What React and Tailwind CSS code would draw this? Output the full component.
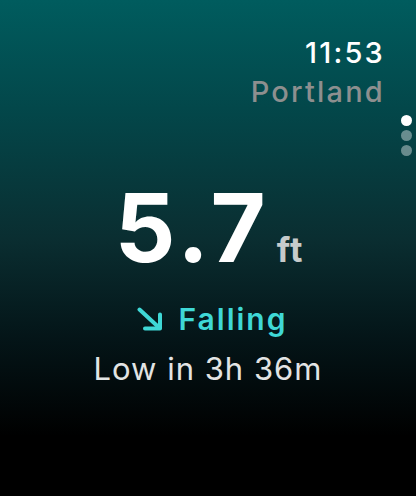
import React from 'react';

const PageDots = () => (
  <div className="absolute right-[4px] top-[115px] flex flex-col gap-[4px]">
    <span className="w-[11px] h-[11px] rounded-full bg-white"></span>
    <span className="w-[11px] h-[11px] rounded-full bg-white/40"></span>
    <span className="w-[11px] h-[11px] rounded-full bg-white/40"></span>
  </div>
);

const FallingArrow = () => (
  <svg width="26" height="24" viewBox="0 0 26 24" fill="none" className="shrink-0">
    <path d="M2.5 2.5 L22.5 21" stroke="#3fd8d6" strokeWidth="4" strokeLinecap="round" />
    <path d="M23 7.5 L23 21.5 L8 21.5" stroke="#3fd8d6" strokeWidth="4" strokeLinecap="round" strokeLinejoin="round" />
  </svg>
);

export default function App() {
  return (
    <div
      className="relative w-[416px] h-[496px] overflow-hidden flex flex-col bg-[linear-gradient(180deg,#005c5e_0%,#03474a_22%,#0a2e31_48%,#041518_68%,#000000_88%)]"
      style={{ fontFamily: 'Inter, "Noto Sans", sans-serif' }}
    >
      {/* Header: time + city */}
      <div className="flex flex-col items-end pr-[31px] pt-[38px]">
        <span className="text-[29px] leading-none font-medium text-white tracking-[2.2px]">11:53</span>
        <span className="mt-[10px] text-[29px] leading-none font-medium text-[#8d8f8f] tracking-[2.2px]">Portland</span>
      </div>

      <PageDots />

      {/* Tide reading */}
      <div className="flex flex-col items-center mt-[74px]">
        <div className="flex items-baseline gap-[7px] pl-[2px]">
          <span className="text-[95px] leading-none font-bold text-white tracking-[4px]">5.7</span>
          <span className="text-[34px] leading-none font-bold text-[#c6cbcb] tracking-[1px]">ft</span>
        </div>
        <div className="mt-[29px] flex items-center gap-[16px] pl-[8px]">
          <FallingArrow />
          <span className="text-[30px] leading-none font-semibold text-[#3fd8d6] tracking-[2px]">Falling</span>
        </div>
        <span className="mt-[19px] text-[31px] leading-none font-normal text-[#e2e4e4] tracking-[1px]">Low in 3h 36m</span>
      </div>
    </div>
  );
}
